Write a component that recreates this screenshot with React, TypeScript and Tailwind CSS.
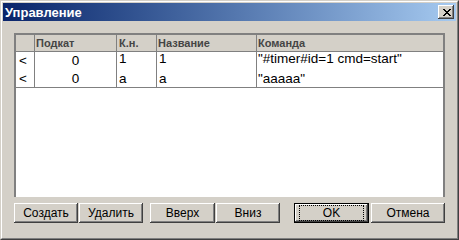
import React from "react";

// Win2000-style dialog "Управление"

interface Row {
  sub: string;
  key: string;
  name: string;
  cmd: string;
}

const rows: Row[] = [
  { sub: "0", key: "1", name: "1", cmd: "\"#timer#id=1 cmd=start\"" },
  { sub: "0", key: "a", name: "a", cmd: "\"aaaaa\"" },
];

const bevel =
  "shadow-[inset_-1px_-1px_#404040,inset_1px_1px_#ffffff,inset_-2px_-2px_#808080,inset_2px_2px_#d4d0c8]";

const CloseGlyph = () => {
  const cells = [
    "##....##",
    ".##..##.",
    "..####..",
    "...##...",
    "..####..",
    ".##..##.",
    "##....##",
  ];
  return (
    <svg width="8" height="7" viewBox="0 0 8 7" shapeRendering="crispEdges">
      {cells.map((line, y) =>
        line.split("").map((c, x) =>
          c === "#" ? <rect key={`${x}-${y}`} x={x} y={y} width="1" height="1" fill="#000" /> : null
        )
      )}
    </svg>
  );
};

const Btn = ({ label, className = "" }: { label: string; className?: string }) => (
  <button
    className={`h-[20px] bg-[#d4d0c8] text-black text-[12px] leading-none flex items-center justify-center ${bevel} ${className}`}
  >
    {label}
  </button>
);

const App = () => {
  return (
    <div className="w-[459px] h-[240px] font-['Liberation_Sans',Arial,sans-serif] border border-t-[#d4d0c8] border-l-[#d4d0c8] border-r-[#404040] border-b-[#404040]">
      <div className="w-full h-full border border-t-white border-l-white border-r-[#808080] border-b-[#808080] bg-[#d4d0c8] p-px flex flex-col">
        {/* caption */}
        <div className="h-[18px] shrink-0 flex items-center justify-between pl-[2px] pr-[2px] bg-linear-to-r from-[#0a246a] to-[#a6caf0]">
          <span className="text-white font-bold text-[13px] leading-none">Управление</span>
          <button className={`w-[16px] h-[14px] bg-[#d4d0c8] flex items-center justify-center pl-px ${bevel}`}>
            <CloseGlyph />
          </button>
        </div>

        {/* body */}
        <div className="flex-1 flex flex-col px-[11px] pt-[12px] pb-[14px]">
          <div className="h-[164px] bg-white border-t-2 border-l-2 border-r-2 border-[#808080] flex flex-col">
            {/* header */}
            <div className="grid grid-cols-[19px_82px_40px_100px_1fr] h-[17px] bg-[#d4d0c8] border-b border-[#808080] text-[11px] font-bold text-[#454545] leading-[16px]">
              <div className="border-r border-[#808080]" />
              <div className="border-r border-[#808080] pl-px">Подкат</div>
              <div className="border-r border-[#808080] pl-[2px]">К.н.</div>
              <div className="border-r border-[#808080] pl-px">Название</div>
              <div className="pl-px">Команда</div>
            </div>
            {/* rows */}
            <div className="border-b border-[#808080] text-[13.5px] text-black">
              {rows.map((r, i) => {
                const lead = i === 0 ? "leading-[13px]" : "leading-[18px]";
                return (
                  <div
                    key={i}
                    className={`grid grid-cols-[19px_82px_40px_100px_1fr] ${i === 0 ? "h-[18px]" : "h-[17px]"}`}
                  >
                    <div className="border-r border-[#808080] pl-[3px] leading-[18px]">&lt;</div>
                    <div className="border-r border-[#808080] text-center leading-[18px]">{r.sub}</div>
                    <div className={`border-r border-[#808080] pl-[2px] ${lead}`}>{r.key}</div>
                    <div className={`border-r border-[#808080] pl-[2px] ${lead}`}>{r.name}</div>
                    <div className={`pl-px whitespace-nowrap ${lead}`}>{r.cmd}</div>
                  </div>
                );
              })}
            </div>
          </div>

          {/* buttons */}
          <div className="mt-[6px] flex h-[20px]">
            <Btn label="Создать" className="w-[64px]" />
            <Btn label="Удалить" className="w-[64px] ml-px" />
            <Btn label="Вверх" className="w-[65px] ml-[7px]" />
            <Btn label="Вниз" className="w-[64px] ml-px" />
            <button className="w-[75px] h-[20px] ml-[14px] border border-black bg-[#d4d0c8] flex">
              <span className={`flex-1 flex px-[4px] py-[1px] ${bevel}`}>
                <span className="flex-1 border border-dotted border-black flex items-center justify-center text-[12px] leading-none text-black">
                  OK
                </span>
              </span>
            </button>
            <Btn label="Отмена" className="w-[74px] ml-[2px]" />
          </div>
        </div>
      </div>
    </div>
  );
};

export default App;
